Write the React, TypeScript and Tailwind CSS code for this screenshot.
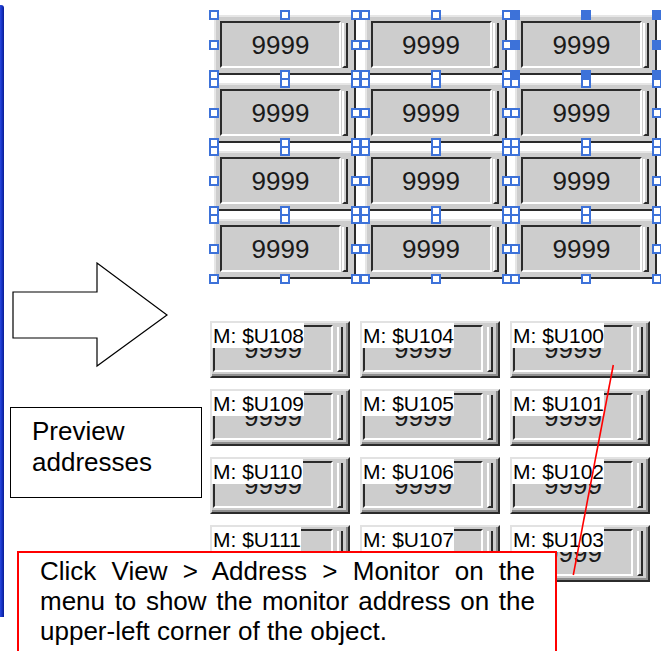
import clsx from "clsx";

const labels = [
  ["M: $U108", "M: $U104", "M: $U100"],
  ["M: $U109", "M: $U105", "M: $U101"],
  ["M: $U110", "M: $U106", "M: $U102"],
  ["M: $U111", "M: $U107", "M: $U103"],
];

const handleSpots = [
  "left-0 top-0",
  "left-1/2 top-0",
  "left-full top-0",
  "left-0 top-1/2",
  "left-full top-1/2",
  "left-0 top-full",
  "left-1/2 top-full",
  "left-full top-full",
];

function Handles({ filled }: { filled: boolean }) {
  return (
    <>
      {handleSpots.map((spot) => (
        <span
          key={spot}
          className={clsx(
            "absolute h-[10px] w-[10px] -translate-x-1/2 -translate-y-1/2 border-2 border-[#3d72d9]",
            filled ? "bg-[#3d72d9]" : "bg-white",
            spot
          )}
        />
      ))}
    </>
  );
}

function Digits() {
  return (
    <div className="flex flex-1 items-center justify-center border-2 border-t-[#2b2b2b] border-l-[#2b2b2b] border-r-white border-b-white text-[26px] leading-none text-[#1a1a1a]">
      9999
    </div>
  );
}

function Strip({ className }: { className?: string }) {
  return (
    <div
      className={clsx(
        "mt-[2px] w-[6px] border-l-2 border-r-2 border-b-2 border-l-white border-r-[#2b2b2b] border-b-[#2b2b2b]",
        className
      )}
    />
  );
}

// selected objects in the editor (top)
function SelectedCell({ filled }: { filled: boolean }) {
  return (
    <div className="relative">
      <div className="flex h-[60px] w-[142px] border-2 border-t-[#e6e6e6] border-l-[#e6e6e6] border-r-[#2b2b2b] border-b-[#2b2b2b] bg-[#cdcdcd] pt-[4px] pb-[5px] pl-[4px] pr-[6px]">
        <Digits />
        <Strip className="ml-[1px]" />
      </div>
      <Handles filled={filled} />
    </div>
  );
}

// objects with monitor address preview (bottom)
function AddressCell({ label }: { label: string }) {
  return (
    <div className="relative flex h-[57px] w-[140px] border-2 border-t-[#e2e2e2] border-l-[#e2e2e2] border-r-[#2b2b2b] border-b-[#2b2b2b] bg-[#cdcdcd] pt-[2px] pb-[4px] pl-[1px] pr-[5px] shadow-[inset_-2px_-2px_0_#8f8f8f]">
      <Digits />
      <Strip className="ml-[4px]" />
      <span className="absolute left-0 top-0 bg-white pl-[1px] text-[21px] leading-[25px] text-black">
        {label}
      </span>
    </div>
  );
}

export default function App() {
  return (
    <div className="relative h-[651px] w-[661px] overflow-hidden bg-white font-['Liberation_Sans',Arial,sans-serif]">
      <div className="flex">
        {/* blue page edge */}
        <div className="mt-[5px] h-[612px] w-[4px] rounded-tr-[3px] bg-gradient-to-r from-[#2a48dc] via-[#1431c4] to-[#0a1c92]" />

        {/* left annotations */}
        <div className="flex w-[206px] flex-col">
          <svg className="ml-[8px] mt-[262px]" width="157" height="106" viewBox="0 0 157 106">
            <polygon
              points="1,30 85,30 85,1 155,53 85,104 85,76 1,76"
              fill="white"
              stroke="black"
              strokeWidth="1.2"
            />
          </svg>
          <div className="ml-[6px] mt-[39px] h-[91px] w-[192px] border border-black pl-[21px] pt-[8px] text-[26px] leading-[31px] text-black">
            Preview
            <br />
            addresses
          </div>
        </div>

        {/* object grids */}
        <div className="flex flex-col">
          <div className="ml-[4px] mt-[15px] grid grid-cols-[repeat(3,142px)] grid-rows-[repeat(4,60px)] gap-x-[8.5px] gap-y-[8px]">
            {labels.map((row, r) =>
              row.map((_, c) => <SelectedCell key={`${r}-${c}`} filled={r === 0 && c === 2} />)
            )}
          </div>
          <div className="mt-[42px] grid grid-cols-[repeat(3,140px)] grid-rows-[repeat(4,57px)] gap-x-[10px] gap-y-[11px]">
            {labels.map((row) => row.map((label) => <AddressCell key={label} label={label} />))}
          </div>
        </div>
      </div>

      <svg className="pointer-events-none absolute left-0 top-0" width="661" height="651">
        <line x1="613.3" y1="365" x2="573.3" y2="575" stroke="#ff0000" strokeWidth="1.6" />
      </svg>

      {/* callout */}
      <div className="absolute left-[17px] top-[551px] h-[120px] w-[540px] border-2 border-[#ff0000] bg-white pl-[21px] pr-[20px] pt-[3px] text-justify text-[26px] leading-[30px] text-black">
        Click View &gt; Address &gt; Monitor on the menu to show the monitor address on the upper-left corner of the object.
      </div>
    </div>
  );
}
